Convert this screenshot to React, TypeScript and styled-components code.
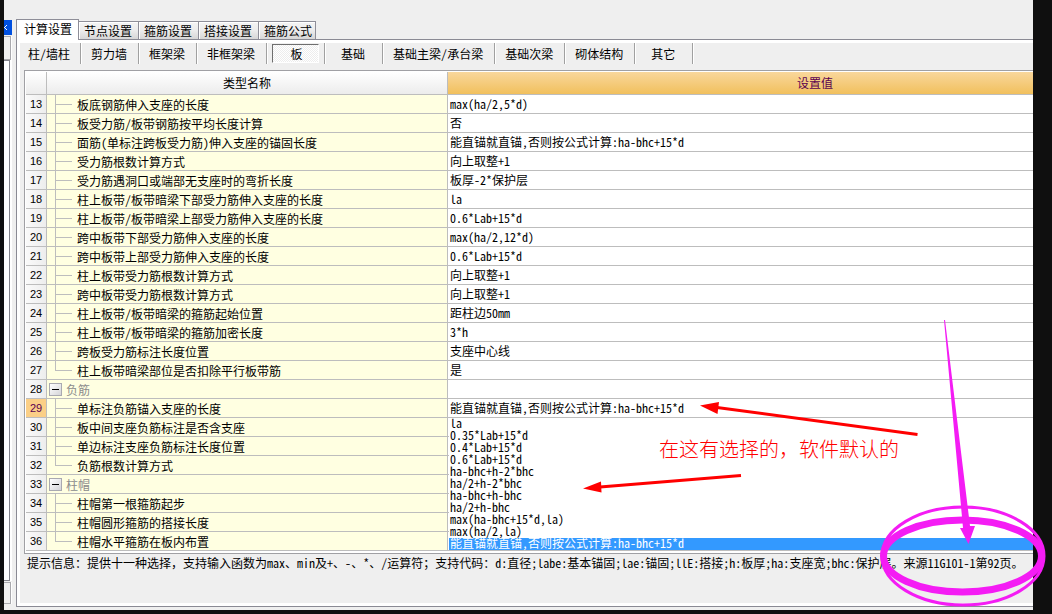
import React from "react";
import styled, { createGlobalStyle, css } from "styled-components";

const GlobalStyle = createGlobalStyle`
  *, *::before, *::after { box-sizing: border-box; }
  body {
    margin: 0;
    background: #0f0f0f;
    color: #000;
    font: 12px/18px "Noto Sans CJK SC", sans-serif;
  }
  button { font: inherit; color: inherit; border: 0; margin: 0; padding: 0; background: none; }
`;

const Screen = styled.div`
  position: relative;
  min-height: 100vh;
  padding: 0 19px 4px 4px;
  overflow: hidden;
  display: flex;
`;

const Window = styled.div`
  flex: 1;
  min-width: 0;
  display: flex;
  background: #efefef;
`;

/* ---- strip of the neighbouring dock pane ---- */

const Dock = styled.div`
  flex: 0 0 12px;
  display: flex;
  flex-direction: column;
  padding-top: 20px;
`;

const DockClose = styled.button`
  width: 8px;
  height: 15px;
  background: #0050e0;
  display: flex;
  align-items: center;
`;

const DockBar = styled.div`
  width: 7px;
  height: 24px;
  margin-top: 1px;
  border: 1px solid #a9a9ad;
  border-left: 0;
  box-shadow: 1px 0 #fff;
`;

const DockBody = styled.div`
  flex: 1;
  width: 6px;
  background: #fff;
  border: 1px solid #83838b;
  border-left: 0;
  box-shadow: 2px 0 #fff;
`;

const DockFoot = styled.div`
  width: 7px;
  height: 22px;
  margin: 1px 0 6px;
  border: 1px solid #a9a9ad;
  border-left: 0;
  box-shadow: 1px 0 #fff;
`;

/* ---- tabs ---- */

const Main = styled.main`
  flex: 1;
  min-width: 0;
  display: flex;
  flex-direction: column;
  padding: 19px 0 3px;
`;

const TabBar = styled.div`
  display: flex;
  align-items: flex-end;
  height: 20px;
`;

const Tab = styled.button<{ $active?: boolean }>`
  height: 18px;
  padding: 0 6px 0 5px;
  line-height: 17px;
  border: 1px solid #8e8e98;
  border-left: 0;
  border-bottom: 0;
  background: linear-gradient(#f4f4f4 0%, #ececec 50%, #d6d6d6 100%);
  box-shadow: inset 1px 1px #fff;
  &:last-child { padding-right: 3px; }
  ${(p) =>
    p.$active &&
    css`
      height: 21px;
      margin-bottom: -1px;
      padding: 0 6px 3px 7px;
      border-left: 1px solid #8e8e98;
      background: #fff;
      z-index: 1;
    `}
`;

const Page = styled.section`
  flex: 1;
  display: flex;
  flex-direction: column;
  border: 1px solid #8a8a94;
  border-right: 0;
  padding: 3px 0 3px 3px;
  background: #efefef;
  box-shadow: inset 3px 3px #fff, inset 0 -3px #fff;
`;

const ToolBar = styled.nav`
  display: flex;
  height: 21px;
  margin-bottom: 6px;
`;

const Tool = styled.button`
  min-width: 58px;
  padding: 0 11px 0 10px;
  line-height: 21px;
  white-space: nowrap;
  border-right: 1px solid #a0a0a0;
  box-shadow: 1px 0 #fff;
  &:first-child { padding: 0 10px 0 8px; }
`;

const ToolPressed = styled.span`
  display: flex;
  padding: 1px 5px;
  border-right: 1px solid #a0a0a0;
  box-shadow: 1px 0 #fff;
  button {
    width: 47px;
    padding-left: 2px;
    line-height: 18px;
    border: 1px solid #fff;
    border-top-color: #6e6e6e;
    border-left-color: #6e6e6e;
    background: repeating-conic-gradient(#fff 0 25%, #ededed 0 50%) 0 0 / 2px 2px;
  }
`;

/* ---- grid ---- */

const GridFrame = styled.div`
  position: relative;
  margin-left: 4px;
  padding: 1px 0 2px 1px;
  border: 1px solid #a0a0a4;
  border-right: 0;
  background: #fff;
`;

const Grid = styled.table`
  width: 100%;
  table-layout: fixed;
  border-collapse: separate;
  border-spacing: 0;
  th, td {
    padding: 0;
    font-weight: normal;
    text-align: left;
    border-bottom: 1px solid #bdbdbd;
    white-space: nowrap;
  }
`;

const HeadCell = styled.th<{ $hot?: boolean }>`
  && {
    height: 23px;
    line-height: 22px;
    text-align: center;
    background: linear-gradient(#ffffff, #ececec);
    border-right: 1px solid #bdbdbd;
    ${(p) =>
      p.$hot &&
      css`
        padding-left: 149px;
        color: #5a0050;
        border-right: 0;
        background: linear-gradient(#f9d79c, #f1c05d);
      `}
  }
`;

const NumCell = styled.th<{ $hot?: boolean }>`
  && {
    height: 19px;
    font: 11px/18px "Liberation Sans", sans-serif;
    text-align: center;
    border-right: 1px solid #bdbdbd;
    background: linear-gradient(90deg, #fafafa, #ededed);
    ${(p) =>
      p.$hot &&
      css`
        color: #5a0050;
        background: #fbcf86;
      `}
  }
`;

const NameCell = styled.td`
  && {
    height: 19px;
    border-right: 1px solid #bdbdbd;
    background: #ffffe1;
  }
`;

const NameLine = styled.div<{ $group?: boolean }>`
  display: flex;
  align-items: center;
  height: 18px;
  line-height: 18px;
  ${(p) => p.$group && "color: #8c8c8c;"}
`;

const Name = styled.span`
  padding-top: 2px;
`;

const Branch = styled.svg`
  flex: none;
  display: block;
  width: 30px;
  height: 18px;
  fill: none;
  stroke: #bdbdbd;
  shape-rendering: crispEdges;
`;

const Toggle = styled.button`
  flex: none;
  display: flex;
  align-items: center;
  justify-content: center;
  width: 13px;
  height: 13px;
  margin: 0 4px 0 2px;
  border: 1px solid #a9a9b1;
  background: linear-gradient(135deg, #fff, #d4d4d8);
  &::before {
    content: "";
    width: 7px;
    height: 1px;
    background: #000;
  }
`;

const ValueCell = styled.td`
  && {
    height: 19px;
    padding-left: 2px;
    line-height: 18px;
    background: #fff;
  }
`;

const Combo = styled.button`
  display: block;
  width: 100%;
  height: 18px;
  text-align: left;
`;

const Options = styled.ul`
  position: absolute;
  left: 424px;
  right: 0;
  bottom: 3px;
  margin: 0;
  padding: 0;
  list-style: none;
  background: #fff;
`;

const Option = styled.li<{ $selected?: boolean }>`
  height: 12px;
  line-height: 10px;
  padding-left: 1px;
  white-space: nowrap;
  ${(p) => p.$selected && "background: #3399ff; color: #fff;"}
`;

const Hint = styled.p`
  margin: 0;
  padding: 0 7px;
  line-height: 18px;
  white-space: nowrap;
`;

const Half = styled.span`
  font-feature-settings: "hwid";
`;

/* ---- marks drawn over the window ---- */

const Marks = styled.svg`
  position: absolute;
  left: 0;
  top: 0;
  width: 1052px;
  height: 614px;
  pointer-events: none;
`;

const Remark = styled.p`
  position: absolute;
  left: 659px;
  top: 436px;
  margin: 0;
  color: #f00;
  font-size: 20px;
  font-weight: 300;
  line-height: 26px;
  white-space: nowrap;
`;

/* Latin runs take half of an ideograph's width. */
const Text = ({ children }: { children: string }) => (
  <>
    {children
      .split(/([\x20-\x7e]+)/)
      .filter(Boolean)
      .map((run, i) => (/^[\x20-\x7e]/.test(run) ? <Half key={i}>{run}</Half> : run))}
  </>
);

const tabs = ["计算设置", "节点设置", "箍筋设置", "搭接设置", "箍筋公式"];
const tools = ["柱/墙柱", "剪力墙", "框架梁", "非框架梁", "板", "基础", "基础主梁/承台梁", "基础次梁", "砌体结构", "其它"];

type Row = { name: string; value?: string; kind?: "group" | "last" };

const rows: Row[] = [
  { name: "板底钢筋伸入支座的长度", value: "max(ha/2,5*d)" },
  { name: "板受力筋/板带钢筋按平均长度计算", value: "否" },
  { name: "面筋(单标注跨板受力筋)伸入支座的锚固长度", value: "能直锚就直锚,否则按公式计算:ha-bhc+15*d" },
  { name: "受力筋根数计算方式", value: "向上取整+1" },
  { name: "受力筋遇洞口或端部无支座时的弯折长度", value: "板厚-2*保护层" },
  { name: "柱上板带/板带暗梁下部受力筋伸入支座的长度", value: "la" },
  { name: "柱上板带/板带暗梁上部受力筋伸入支座的长度", value: "0.6*Lab+15*d" },
  { name: "跨中板带下部受力筋伸入支座的长度", value: "max(ha/2,12*d)" },
  { name: "跨中板带上部受力筋伸入支座的长度", value: "0.6*Lab+15*d" },
  { name: "柱上板带受力筋根数计算方式", value: "向上取整+1" },
  { name: "跨中板带受力筋根数计算方式", value: "向上取整+1" },
  { name: "柱上板带/板带暗梁的箍筋起始位置", value: "距柱边50mm" },
  { name: "柱上板带/板带暗梁的箍筋加密长度", value: "3*h" },
  { name: "跨板受力筋标注长度位置", value: "支座中心线" },
  { name: "柱上板带暗梁部位是否扣除平行板带筋", value: "是", kind: "last" },
  { name: "负筋", kind: "group" },
  { name: "单标注负筋锚入支座的长度", value: "能直锚就直锚,否则按公式计算:ha-bhc+15*d" },
  { name: "板中间支座负筋标注是否含支座" },
  { name: "单边标注支座负筋标注长度位置" },
  { name: "负筋根数计算方式", kind: "last" },
  { name: "柱帽", kind: "group" },
  { name: "柱帽第一根箍筋起步" },
  { name: "柱帽圆形箍筋的搭接长度" },
  { name: "柱帽水平箍筋在板内布置", kind: "last" },
];

const options = [
  "la",
  "0.35*Lab+15*d",
  "0.4*Lab+15*d",
  "0.6*Lab+15*d",
  "ha-bhc+h-2*bhc",
  "ha/2+h-2*bhc",
  "ha-bhc+h-bhc",
  "ha/2+h-bhc",
  "max(ha-bhc+15*d,la)",
  "max(ha/2,la)",
  "能直锚就直锚,否则按公式计算:ha-bhc+15*d",
];

const FIRST = 13;
const CURRENT = 29;

export default function App() {
  return (
    <Screen>
      <GlobalStyle />
      <Window>
        <Dock>
          <DockClose aria-label="关闭">
            <svg width="8" height="9" viewBox="0 0 8 9" fill="none" stroke="#fff">
              <path d="M-2 2 L3 7 M3 2 L-2 7" />
            </svg>
          </DockClose>
          <DockBar />
          <DockBody />
          <DockFoot />
        </Dock>
        <Main>
          <TabBar role="tablist">
            {tabs.map((t, i) => (
              <Tab key={t} role="tab" aria-selected={i === 0} $active={i === 0}>
                {t}
              </Tab>
            ))}
          </TabBar>
          <Page>
            <ToolBar>
              {tools.map((t) =>
                t === "板" ? (
                  <ToolPressed key={t}>
                    <button aria-pressed="true">{t}</button>
                  </ToolPressed>
                ) : (
                  <Tool key={t}>
                    <Text>{t}</Text>
                  </Tool>
                )
              )}
            </ToolBar>
            <GridFrame>
              <Grid>
                <colgroup>
                  <col style={{ width: 21 }} />
                  <col style={{ width: 401 }} />
                  <col />
                </colgroup>
                <thead>
                  <tr>
                    <HeadCell aria-label="行号" />
                    <HeadCell scope="col">类型名称</HeadCell>
                    <HeadCell scope="col" $hot>设置值</HeadCell>
                  </tr>
                </thead>
                <tbody>
                  {rows.map((r, i) => {
                    const n = FIRST + i;
                    return (
                      <tr key={n}>
                        <NumCell scope="row" $hot={n === CURRENT}>{n}</NumCell>
                        <NameCell>
                          <NameLine $group={r.kind === "group"}>
                            {r.kind === "group" ? (
                              <Toggle aria-label="折叠" aria-expanded="true" />
                            ) : (
                              <Branch viewBox="0 0 30 18">
                                <path d={`M8.5 0 V${r.kind === "last" ? 10 : 18} M8 9.5 H25`} />
                              </Branch>
                            )}
                            <Name>
                              <Text>{r.name}</Text>
                            </Name>
                          </NameLine>
                        </NameCell>
                        <ValueCell>
                          {n === CURRENT ? (
                            <Combo aria-haspopup="listbox" aria-expanded="true">
                              <Text>{r.value!}</Text>
                            </Combo>
                          ) : (
                            r.value && <Text>{r.value}</Text>
                          )}
                        </ValueCell>
                      </tr>
                    );
                  })}
                </tbody>
              </Grid>
              <Options role="listbox" aria-label="设置值">
                {options.map((o, i) => (
                  <Option key={o} role="option" aria-selected={i === 10} $selected={i === 10}>
                    <Text>{o}</Text>
                  </Option>
                ))}
              </Options>
            </GridFrame>
            <Hint>
              <Text>
                提示信息：提供十一种选择，支持输入函数为max、min及+、-、*、/运算符；支持代码：d:直径;labe:基本锚固;lae:锚固;llE:搭接;h:板厚;ha:支座宽;bhc:保护层。来源11G101-1第92页。
              </Text>
            </Hint>
          </Page>
        </Main>
      </Window>
      <Remark>在这有选择的，软件默认的</Remark>
      <Marks viewBox="0 0 1052 614" aria-hidden="true">
        <g stroke="#f00" strokeWidth="3" fill="none">
          <path d="M917.5 434.5 L717 407.5" />
          <path d="M741 475.5 L600 487" />
        </g>
        <g fill="#f00">
          <path d="M700 405.5 L719 402 L717.5 414 Z" />
          <path d="M583 488.5 L601 481.5 L601.5 492.5 Z" />
        </g>
        <g fill="#f41cf4">
          <path d="M944 320 L945 320 L970 526 L975 526 L968.5 544 L960 528 L963 528 Z" />
        </g>
        <g stroke="#f41cf4" fill="none">
          <ellipse cx="962.5" cy="556" rx="79" ry="36" strokeWidth="7" />
          <ellipse cx="963" cy="556" rx="81" ry="49" strokeWidth="3" />
        </g>
      </Marks>
    </Screen>
  );
}
